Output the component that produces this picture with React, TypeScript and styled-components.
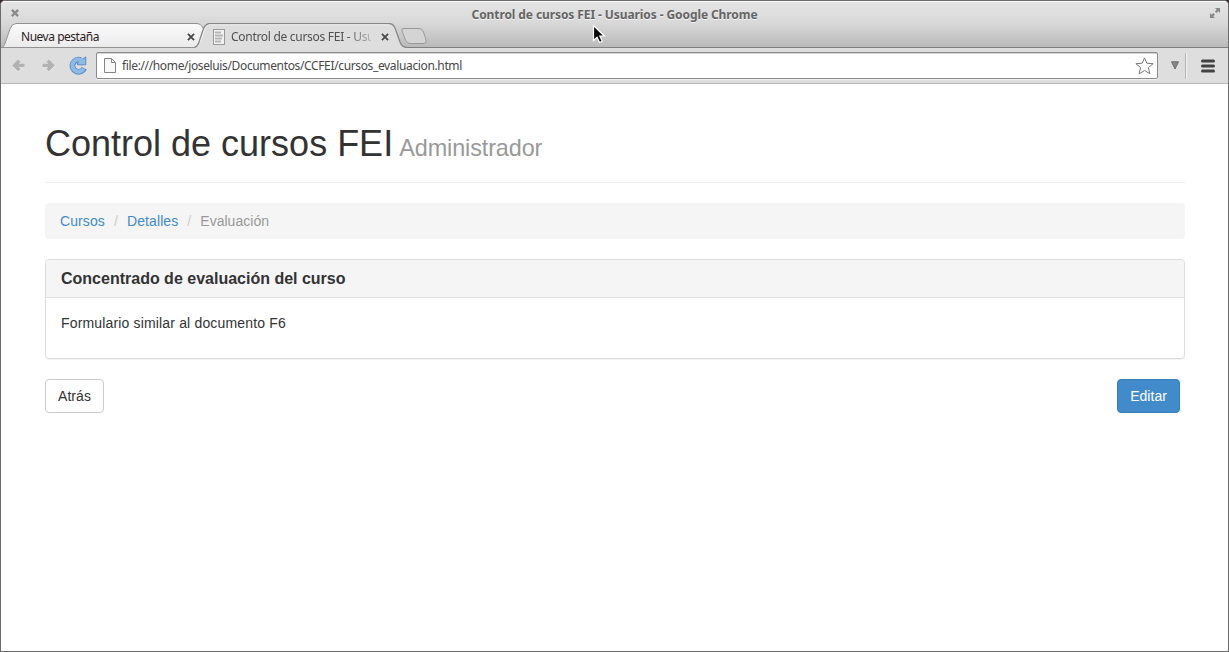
import React from "react";
import styled, { createGlobalStyle } from "styled-components";

const GlobalStyle = createGlobalStyle`
  *, *::before, *::after { box-sizing: border-box; }
  html, body { margin: 0; padding: 0; overflow: hidden; background: #3b2a2c; }
`;

const uiFont = `"Noto Sans", "Open Sans", sans-serif`;

const BrowserWindow = styled.div`
  display: flex;
  flex-direction: column;
  position: relative;
  width: 1229px;
  height: 652px;
  border: 1px solid #6b6b6b;
  border-radius: 5px 5px 0 0;
  background: #fff;
  overflow: hidden;
`;

const Frame = styled.header`
  display: flex;
  flex-direction: column;
  flex: none;
  height: 47px;
  border-top: 1px solid #fafafa;
  border-bottom: 1px solid #808080;
  background: linear-gradient(#e4e4e4, #d9d9d9 45%, #bababa);
`;

const TitleBar = styled.div`
  display: flex;
  align-items: center;
  justify-content: space-between;
  flex: none;
  height: 21px;
  padding: 2px 7px 0 9px;
  svg { display: block; margin-bottom: 2px; }
`;

const Title = styled.div`
  color: #656565;
  font: bold 12px/20px ${uiFont};
  letter-spacing: -0.09px;
  white-space: nowrap;
  text-shadow: 0 1px 0 #f2f2f2;
  padding-top: 3px;
`;

const TabStrip = styled.div`
  display: flex;
  flex: none;
  height: 25px;
`;

const Tab = styled.div<{ $front?: boolean }>`
  position: relative;
  z-index: ${(p) => (p.$front ? 2 : 1)};
  display: flex;
  align-items: center;
  flex: none;
  width: ${(p) => (p.$front ? 213 : 204)}px;
  height: 25px;
  margin-left: ${(p) => (p.$front ? -11 : 0)}px;
  padding: 2px ${(p) => (p.$front ? 17 : 9)}px 0 ${(p) => (p.$front ? 19 : 20)}px;
  svg { flex: none; }
`;

const TabShape = styled.svg`
  position: absolute;
  z-index: -1;
  top: 0;
  left: 0;
`;

const TabLabel = styled.span<{ $muted?: boolean }>`
  flex: 1;
  min-width: 0;
  white-space: nowrap;
  font: 12px/18px ${uiFont};
  letter-spacing: ${(p) => (p.$muted ? -0.29 : -0.48)}px;
  color: ${(p) => (p.$muted ? "#505050" : "#2e1c1e")};
  margin-left: ${(p) => (p.$muted ? 6 : 0)}px;
  margin-right: ${(p) => (p.$muted ? 9 : 0)}px;
  mask-image: ${(p) => (p.$muted ? "linear-gradient(90deg, #000 116px, transparent 148px)" : "none")};
`;

const NewTab = styled.svg`
  flex: none;
  margin: 4px 0 0 -8px;
`;

const Toolbar = styled.div`
  display: flex;
  align-items: center;
  flex: none;
  height: 36px;
  padding: 0 13px 0 10px;
  border-bottom: 1px solid #b9b9b9;
  background: #dedede;
  svg { flex: none; display: block; }
`;

const NavButtons = styled.div`
  display: flex;
  align-items: center;
  width: 85px;
  gap: 15px;
  svg:last-child { margin-left: -3px; }
`;

const AddressBar = styled.div`
  display: flex;
  align-items: center;
  width: 1062px;
  height: 27px;
  padding: 0 3px 0 7px;
  border: 1px solid #8b8b8b;
  border-radius: 2px;
  background: #fff;
  box-shadow: inset 0 1px 0 #d5d5d5, 0 1px 0 #efefef;
`;

const Address = styled.span`
  flex: 1;
  margin-left: 6px;
  color: #484848;
  font: 12px/18px ${uiFont};
  letter-spacing: -0.36px;
`;

const MenuMarker = styled.svg`
  margin-left: 13px;
`;

const Divider = styled.i`
  width: 2px;
  height: 26px;
  margin: 0 14px 0 6px;
  border-left: 1px solid #b7b7b7;
  border-right: 1px solid #f0f0f0;
`;

const Page = styled.main`
  padding: 40px 43px 0 44px;
  color: #333;
  font: 14px/20px "Liberation Sans", Arial, sans-serif;
`;

const PageHeader = styled.div`
  height: 59px;
  margin-bottom: 20px;
  border-bottom: 1px solid #eee;
`;

const Heading = styled.h1`
  margin: 0;
  font-size: 36px;
  font-weight: 500;
  line-height: 39.6px;
  small { margin-left: 1px; color: #999; font-size: 23.4px; font-weight: normal; line-height: 1; letter-spacing: -0.1px; }
`;

const Breadcrumb = styled.ol`
  display: flex;
  margin: 0 0 20px;
  padding: 8px 15px;
  list-style: none;
  border-radius: 4px;
  background: #f5f5f5;
`;

const Crumb = styled.li<{ $current?: boolean }>`
  color: ${(p) => (p.$current ? "#999" : "#428bca")};
  letter-spacing: ${(p) => (p.$current ? 0.03 : 0.1)}px;
  &:not(:first-child)::before { content: "/"; padding: 0 9px; color: #ccc; }
`;

const Panel = styled.section`
  height: 100px;
  margin-bottom: 20px;
  border: 1px solid #ddd;
  border-radius: 4px;
  box-shadow: 0 1px 1px rgba(0, 0, 0, 0.05);
  overflow: hidden;
`;

const PanelTitle = styled.h3`
  margin: 0;
  padding: 10px 15px;
  border-bottom: 1px solid #ddd;
  background: #f5f5f5;
  font-size: 16px;
  font-weight: bold;
  line-height: 17px;
`;

const PanelBody = styled.p`
  margin: 0;
  padding: 15px;
  letter-spacing: 0.16px;
`;

const Actions = styled.div`
  display: flex;
  justify-content: space-between;
  padding-right: 5px;
`;

const Button = styled.button<{ $primary?: boolean }>`
  height: 34px;
  padding: 0 12px;
  border: 1px solid ${(p) => (p.$primary ? "#357ebd" : "#ccc")};
  border-radius: 4px;
  background: ${(p) => (p.$primary ? "#428bca" : "#fff")};
  color: ${(p) => (p.$primary ? "#fff" : "#333")};
  font: 14px/20px "Liberation Sans", Arial, sans-serif;
  letter-spacing: 0.05px;
`;

const Pointer = styled.svg`
  position: absolute;
  z-index: 5;
  left: 591px;
  top: 23px;
`;

const Cross = ({ color = "#484848", width = 1.8 }: { color?: string; width?: number }) => (
  <svg width="10" height="10" viewBox="0 0 10 10">
    <path d="M1.9 1.9 8.1 8.1M8.1 1.9 1.9 8.1" stroke={color} strokeWidth={width} />
  </svg>
);

const Arrow = ({ flip = false }: { flip?: boolean }) => (
  <svg width="15" height="16" viewBox="0 0 15 16">
    <g transform={flip ? "translate(15 0) scale(-1 1)" : undefined} fill="none" strokeWidth="3.4">
      <path d="M8.3 2.7 3.6 7.5 8.3 12.3M3.6 7.5H13.5" stroke="#f0f0f0" transform="translate(0 1)" />
      <path d="M8.3 2.7 3.6 7.5 8.3 12.3M3.6 7.5H13.5" stroke="#b2b2b2" />
    </g>
  </svg>
);

export default function App() {
  return (
    <>
      <GlobalStyle />
      <BrowserWindow>
        <Frame>
          <TitleBar>
            <Cross color="#8a8a8a" width={2.3} />
            <Title>Control de cursos FEI - Usuarios - Google Chrome</Title>
            <svg width="12" height="12" viewBox="0 0 12 12">
              <path d="M6 1h5v5L9.3 4.3 7.5 6.1 5.9 4.5 7.7 2.7ZM1 6l1.7 1.7L4.3 6.1 5.9 7.7 4.2 9.3 6 11H1Z" fill="#888" />
            </svg>
          </TitleBar>
          <TabStrip>
            <Tab>
              <TabShape width="206" height="25">
                <defs>
                  <linearGradient id="back" x1="0" y1="0" x2="0" y2="1">
                    <stop offset="0" stopColor="#fafafa" />
                    <stop offset="1" stopColor="#ebebeb" />
                  </linearGradient>
                </defs>
                <path d="M0 24.5C3 24 3.5 22 4.5 19L9 6Q11 .5 15 .5H195Q200 .5 202 5L206 14V24.5Z" fill="url(#back)" stroke="#929292" />
              </TabShape>
              <TabLabel>Nueva pestaña</TabLabel>
              <Cross />
            </Tab>
            <Tab $front>
              <TabShape width="213" height="25">
                <path d="M0 25C3 24 4 22 5 19L9 7Q11 .5 16 .5H195Q199 .5 201 5L206 19C207.5 23 209 24.5 213 24.5V26H0Z" fill="#dedede" />
                <path d="M0 24.5C3 24 4 22 5 19L9 7Q11 .5 16 .5H195Q199 .5 201 5L206 19C207.5 23 209 24.5 213 24.5" fill="none" stroke="#888" strokeWidth="1.3" />
                <path d="M6.5 19 10.5 7Q12 1.8 16 1.8H195" fill="none" stroke="#eee" />
              </TabShape>
              <svg width="12" height="16" viewBox="0 0 12 16">
                <rect x=".5" y=".5" width="11" height="15" fill="#f2f2f2" stroke="#999" />
                <path d="M2 3.5h6M2 6.5h8M2 9.5h7M2 12.5h6" stroke="#b5b5b5" strokeWidth="1.8" />
              </svg>
              <TabLabel $muted>Control de cursos FEI - Usu</TabLabel>
              <Cross />
            </Tab>
            <NewTab width="30" height="18" viewBox="0 0 30 18">
              <path d="M5 1.5H20Q23 1.5 24.5 5L27 13Q28 16.5 25 16.5H11Q8 16.5 6.5 13L3 4Q2 1.5 5 1.5Z" fill="#d4d4d4" stroke="#999" />
            </NewTab>
          </TabStrip>
        </Frame>
        <Toolbar>
          <NavButtons>
            <Arrow />
            <Arrow flip />
            <svg width="19" height="19" viewBox="0 0 19 19">
              <path d="M16.2 12.2A6.1 6.1 0 1 1 12.8 4" fill="none" stroke="#5b8cc4" strokeWidth="5.8" />
              <path d="M17.8 .8V8.8H9.6V6.6Z" fill="#8fbae6" stroke="#5b8cc4" />
              <path d="M15.6 12.8A6.1 6.1 0 1 1 14 4.6" fill="none" stroke="#8fbae6" strokeWidth="4" />
            </svg>
          </NavButtons>
          <AddressBar>
            <svg width="12" height="15" viewBox="0 0 12 15">
              <path d="M.5.5H7.5L11.5 4.5V14.5H.5Z" fill="#f8f8f8" stroke="#858585" />
              <path d="M7.5 1V4.5H11" fill="none" stroke="#858585" />
            </svg>
            <Address>file:///home/joseluis/Documentos/CCFEI/cursos_evaluacion.html</Address>
            <svg width="19" height="18" viewBox="0 0 19 18">
              <path d="M9.5 .9 11.8 6.2 18.1 6.7 13.4 10.6 14.9 16.8 9.5 13.5 4.1 16.8 5.6 10.6.9 6.7 7.2 6.2Z" fill="#fff" stroke="#777" strokeLinejoin="round" />
            </svg>
          </AddressBar>
          <MenuMarker width="8" height="9" viewBox="0 0 8 9">
            <path d="M.5.8H7.5L4 8Z" fill="#858585" stroke="#6e6e6e" />
          </MenuMarker>
          <Divider />
          <svg width="14" height="14" viewBox="0 0 14 14">
            <path d="M1.5 2h11M1.5 7h11M1.5 12h11" stroke="#424242" strokeWidth="3" strokeLinecap="round" />
          </svg>
        </Toolbar>
        <Page>
          <PageHeader>
            <Heading>Control de cursos FEI<small> Administrador</small></Heading>
          </PageHeader>
          <Breadcrumb>
            <Crumb>Cursos</Crumb>
            <Crumb>Detalles</Crumb>
            <Crumb $current>Evaluación</Crumb>
          </Breadcrumb>
          <Panel>
            <PanelTitle>Concentrado de evaluación del curso</PanelTitle>
            <PanelBody>Formulario similar al documento F6</PanelBody>
          </Panel>
          <Actions>
            <Button>Atrás</Button>
            <Button $primary>Editar</Button>
          </Actions>
        </Page>
        <Pointer width="14" height="20" viewBox="0 0 14 20">
          <path d="M1.5 1.5V16.5L5 13.2 7.6 18.5 10.3 17.2 7.8 12H12.3Z" fill="#080808" stroke="#fff" strokeWidth="1.2" />
        </Pointer>
      </BrowserWindow>
    </>
  );
}
